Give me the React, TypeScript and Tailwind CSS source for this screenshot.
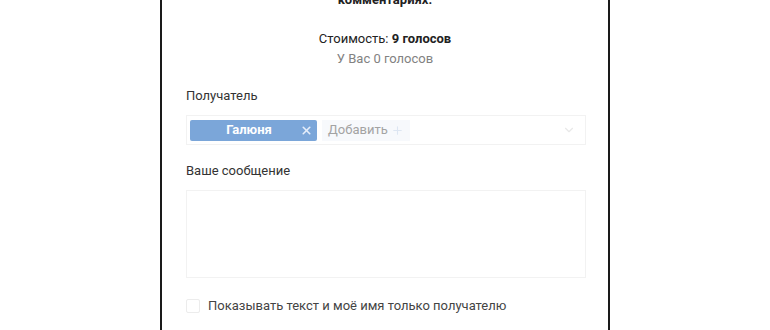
import { X, ChevronDown, Plus } from "lucide-react"

const App = () => {
    return (
        <div className="w-[770px] h-[330px] overflow-hidden bg-white font-['Roboto',sans-serif] text-[13px] text-[#222]">
            <div className="ml-[160px] w-[450px] h-[330px] border-x-2 border-[#1a1a1a] flex flex-col">
                <p className="text-center font-bold mt-[-8px] leading-[16px]">комментариях.</p>

                <div className="mt-[21px] text-center leading-[20px]">
                    <p>Стоимость: <span className="font-bold">9 голосов</span></p>
                    <p className="text-[#828282]">У Вас 0 голосов</p>
                </div>

                <div className="pl-[24px] pr-[22px] mt-[18px]">
                    <p className="text-[#333] leading-[18px]">Получатель</p>
                    <div className="mt-[10px] h-[30px] border border-[#f2f2f2] flex items-center px-[3px] gap-[5px]">
                        <div className="w-[127px] h-[21px] bg-[#7ba6d9] rounded-[2px] flex items-center text-white font-bold">
                            <span className="flex-1 text-center pl-[8px]">Галюня</span>
                            <X className="w-[13px] h-[13px] mr-[4px] text-[#e6eefa]" strokeWidth={3} />
                        </div>
                        <div className="h-[21px] px-[6px] bg-[#f7f9fc] flex items-center gap-[3px] text-[#a3a3a3] w-[88px]">
                            <span>Добавить</span>
                            <Plus className="w-[13px] h-[13px] text-[#dde6f2]" strokeWidth={2} />
                        </div>
                        <div className="flex-1" />
                        <ChevronDown className="w-[14px] h-[14px] mr-[6px] text-[#e8e8e8]" />
                    </div>

                    <p className="mt-[17px] text-[#333] leading-[18px]">Ваше сообщение</p>
                    <div className="mt-[10px] h-[88px] border border-[#f2f2f2]" />

                    <div className="mt-[18px] flex items-center gap-[8px]">
                        <div className="w-[14px] h-[14px] border border-[#ececec] rounded-[2px]" />
                        <span className="text-[#444]">Показывать текст и моё имя только получателю</span>
                    </div>
                </div>
            </div>
        </div>
    )
}

export default App
